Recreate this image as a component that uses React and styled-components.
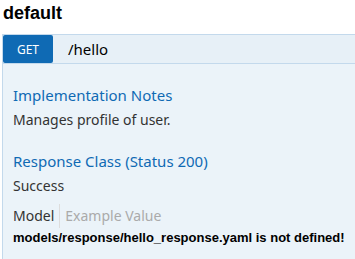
import React from "react";
import styled, { createGlobalStyle } from "styled-components";

const GlobalStyle = createGlobalStyle`
  body {
    margin: 0;
    overflow: hidden;
    background: #ffffff;
    font-family: "Noto Sans", "Open Sans", sans-serif;
  }
`;

const Page = styled.div`
  width: 420px;
  padding-left: 2px;
`;

const Title = styled.h2`
  margin: 0 0 9px 1px;
  font-family: "Liberation Sans", Arial, sans-serif;
  font-weight: bold;
  font-size: 18px;
  line-height: 24px;
  padding-top: 1px;
  color: #000;
`;

const Heading = styled.div`
  display: flex;
  align-items: center;
  height: 28px;
  background: #e7f0f7;
  border: 1px solid #c3d9ec;
`;

const Method = styled.span`
  display: flex;
  align-items: center;
  justify-content: center;
  width: 50px;
  height: 28px;
  background: #0f6ab4;
  color: #fff;
  border-radius: 2px;
  font-size: 12px;
  padding-top: 1px;
  box-sizing: border-box;
`;

const Path = styled.span`
  margin-left: 15px;
  font-size: 15px;
  color: #000;
`;

const Content = styled.div`
  background: #ebf3f9;
  border: 1px solid #c3d9ec;
  border-top: none;
  padding: 19px 10px 40px;
`;

const SectionTitle = styled.h4`
  margin: 0;
  font-weight: normal;
  font-size: 15px;
  line-height: 24px;
  color: #0f6ab4;
`;

const Text = styled.p`
  margin: 0 0 18px;
  padding-top: 2px;
  font-size: 14px;
  line-height: 22px;
  color: #333;
`;

const Tabs = styled.div`
  display: flex;
  align-items: center;
  margin-top: -11px;
`;

const Tab = styled.span`
  font-size: 14px;
  line-height: 20px;
  color: ${(p) => (p.active ? "#333" : "#aaa")};
  padding: 2px 5px 2px 0;
  & + & {
    padding-left: 5px;
    border-left: 1px solid #ddd;
  }
`;

const Error = styled.div`
  margin-top: 2px;
  font-family: "Liberation Sans", Arial, sans-serif;
  font-weight: bold;
  font-size: 13px;
  color: #000;
`;

export default function App() {
  return (
    <Page>
      <GlobalStyle />
      <Title>default</Title>
      <Heading>
        <Method>GET</Method>
        <Path>/hello</Path>
      </Heading>
      <Content>
        <SectionTitle>Implementation Notes</SectionTitle>
        <Text>Manages profile of user.</Text>
        <SectionTitle>Response Class (Status 200)</SectionTitle>
        <Text>Success</Text>
        <Tabs>
          <Tab active>Model</Tab>
          <Tab>Example Value</Tab>
        </Tabs>
        <Error>models/response/hello_response.yaml is not defined!</Error>
      </Content>
    </Page>
  );
}
